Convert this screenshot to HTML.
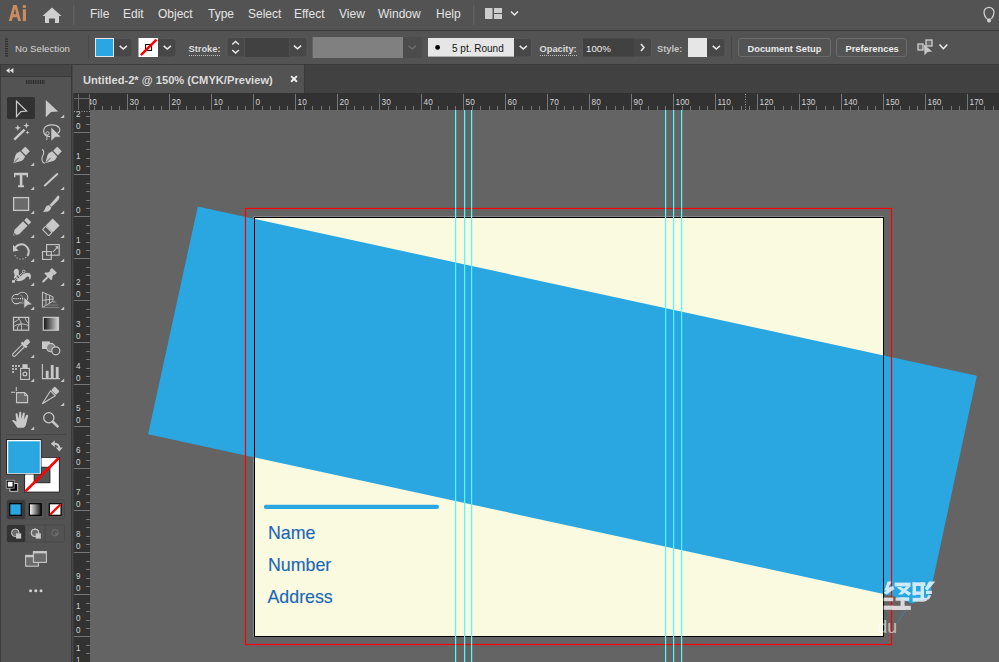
<!DOCTYPE html>
<html><head><meta charset="utf-8">
<style>
html,body{margin:0;padding:0;background:#535353;width:999px;height:662px;overflow:hidden;}
body{font-family:"Liberation Sans",sans-serif;position:relative;}
.a{position:absolute;}
.menu{position:absolute;top:7px;font-size:12px;color:#e4e4e4;white-space:nowrap;}
svg{position:absolute;left:0;top:0}
.cb{font-family:"Liberation Sans",sans-serif;font-size:9.7px;fill:#d6d6d6}
.cbb{font-family:"Liberation Sans",sans-serif;font-size:9.3px;font-weight:bold;fill:#dcdcdc}
.cbk{font-family:"Liberation Sans",sans-serif;font-size:10px;fill:#141414}
.rt{font-family:"Liberation Sans",sans-serif;font-size:9.6px;fill:#d4d4d4}
.bt{font-family:"Liberation Sans",sans-serif;font-size:17.8px;fill:#1a67b8;stroke:#1a67b8;stroke-width:0.15px}
</style></head><body>
<div class="a" style="left:0;top:0;width:999px;height:30px;background:#535353"></div>
<div class="a" style="left:0;top:30px;width:999px;height:1px;background:#3b3b3b"></div>
<div class="a" style="left:0;top:31px;width:999px;height:33px;background:#535353"></div>
<div class="a" style="left:0;top:64px;width:999px;height:1px;background:#3b3b3b"></div>
<div class="a" style="left:0;top:65px;width:1px;height:597px;background:#3b3b3b"></div>
<div class="a" style="left:1px;top:65px;width:70px;height:11px;background:#464646"></div>
<div class="a" style="left:1px;top:76px;width:70px;height:1px;background:#3b3b3b"></div>
<div class="a" style="left:1px;top:77px;width:70px;height:585px;background:#535353"></div>
<div class="a" style="left:71px;top:65px;width:1px;height:597px;background:#383838"></div><div class="a" style="left:72px;top:65px;width:1px;height:597px;background:#474747"></div><div class="a" style="left:73px;top:93px;width:1px;height:569px;background:#3b3b3b"></div>
<div class="a" style="left:74px;top:65px;width:925px;height:28px;background:#414141"></div><div class="a" style="left:304px;top:65px;width:1px;height:28px;background:#3a3a3a"></div>
<div class="a" style="left:74px;top:65px;width:230px;height:28px;background:#535353"></div>
<div class="a" style="left:90px;top:110px;width:909px;height:552px;background:#646464"></div>
<div class="a" style="left:74px;top:93px;width:925px;height:17px;background:#323232"></div>
<div class="a" style="left:74px;top:110px;width:16px;height:552px;background:#323232"></div>
<div class="menu" style="left:90px">File</div>
<div class="menu" style="left:123px">Edit</div>
<div class="menu" style="left:158px">Object</div>
<div class="menu" style="left:208px">Type</div>
<div class="menu" style="left:248px">Select</div>
<div class="menu" style="left:294px">Effect</div>
<div class="menu" style="left:339px">View</div>
<div class="menu" style="left:378px">Window</div>
<div class="menu" style="left:436px">Help</div>
<svg width="999" height="662" viewBox="0 0 999 662">
<g id="rulers"><rect x="94" y="106" width="1" height="4" fill="#777777"/><rect x="102" y="106" width="1" height="4" fill="#777777"/><rect x="111" y="106" width="1" height="4" fill="#777777"/><rect x="119" y="106" width="1" height="4" fill="#777777"/><rect x="127" y="94" width="1" height="16" fill="#777777"/><rect x="136" y="106" width="1" height="4" fill="#777777"/><rect x="144" y="106" width="1" height="4" fill="#777777"/><rect x="153" y="106" width="1" height="4" fill="#777777"/><rect x="161" y="106" width="1" height="4" fill="#777777"/><rect x="169" y="94" width="1" height="16" fill="#777777"/><rect x="178" y="106" width="1" height="4" fill="#777777"/><rect x="186" y="106" width="1" height="4" fill="#777777"/><rect x="195" y="106" width="1" height="4" fill="#777777"/><rect x="203" y="106" width="1" height="4" fill="#777777"/><rect x="211" y="94" width="1" height="16" fill="#777777"/><rect x="220" y="106" width="1" height="4" fill="#777777"/><rect x="228" y="106" width="1" height="4" fill="#777777"/><rect x="237" y="106" width="1" height="4" fill="#777777"/><rect x="245" y="106" width="1" height="4" fill="#777777"/><rect x="253" y="94" width="1" height="16" fill="#777777"/><rect x="262" y="106" width="1" height="4" fill="#777777"/><rect x="270" y="106" width="1" height="4" fill="#777777"/><rect x="279" y="106" width="1" height="4" fill="#777777"/><rect x="287" y="106" width="1" height="4" fill="#777777"/><rect x="295" y="94" width="1" height="16" fill="#777777"/><rect x="304" y="106" width="1" height="4" fill="#777777"/><rect x="312" y="106" width="1" height="4" fill="#777777"/><rect x="321" y="106" width="1" height="4" fill="#777777"/><rect x="329" y="106" width="1" height="4" fill="#777777"/><rect x="337" y="94" width="1" height="16" fill="#777777"/><rect x="346" y="106" width="1" height="4" fill="#777777"/><rect x="354" y="106" width="1" height="4" fill="#777777"/><rect x="363" y="106" width="1" height="4" fill="#777777"/><rect x="371" y="106" width="1" height="4" fill="#777777"/><rect x="379" y="94" width="1" height="16" fill="#777777"/><rect x="388" y="106" width="1" height="4" fill="#777777"/><rect x="396" y="106" width="1" height="4" fill="#777777"/><rect x="405" y="106" width="1" height="4" fill="#777777"/><rect x="413" y="106" width="1" height="4" fill="#777777"/><rect x="421" y="94" width="1" height="16" fill="#777777"/><rect x="430" y="106" width="1" height="4" fill="#777777"/><rect x="438" y="106" width="1" height="4" fill="#777777"/><rect x="447" y="106" width="1" height="4" fill="#777777"/><rect x="455" y="106" width="1" height="4" fill="#777777"/><rect x="463" y="94" width="1" height="16" fill="#777777"/><rect x="472" y="106" width="1" height="4" fill="#777777"/><rect x="480" y="106" width="1" height="4" fill="#777777"/><rect x="489" y="106" width="1" height="4" fill="#777777"/><rect x="497" y="106" width="1" height="4" fill="#777777"/><rect x="505" y="94" width="1" height="16" fill="#777777"/><rect x="514" y="106" width="1" height="4" fill="#777777"/><rect x="522" y="106" width="1" height="4" fill="#777777"/><rect x="531" y="106" width="1" height="4" fill="#777777"/><rect x="539" y="106" width="1" height="4" fill="#777777"/><rect x="547" y="94" width="1" height="16" fill="#777777"/><rect x="556" y="106" width="1" height="4" fill="#777777"/><rect x="564" y="106" width="1" height="4" fill="#777777"/><rect x="573" y="106" width="1" height="4" fill="#777777"/><rect x="581" y="106" width="1" height="4" fill="#777777"/><rect x="589" y="94" width="1" height="16" fill="#777777"/><rect x="598" y="106" width="1" height="4" fill="#777777"/><rect x="606" y="106" width="1" height="4" fill="#777777"/><rect x="615" y="106" width="1" height="4" fill="#777777"/><rect x="623" y="106" width="1" height="4" fill="#777777"/><rect x="631" y="94" width="1" height="16" fill="#777777"/><rect x="640" y="106" width="1" height="4" fill="#777777"/><rect x="648" y="106" width="1" height="4" fill="#777777"/><rect x="657" y="106" width="1" height="4" fill="#777777"/><rect x="665" y="106" width="1" height="4" fill="#777777"/><rect x="673" y="94" width="1" height="16" fill="#777777"/><rect x="682" y="106" width="1" height="4" fill="#777777"/><rect x="690" y="106" width="1" height="4" fill="#777777"/><rect x="699" y="106" width="1" height="4" fill="#777777"/><rect x="707" y="106" width="1" height="4" fill="#777777"/><rect x="715" y="94" width="1" height="16" fill="#777777"/><rect x="724" y="106" width="1" height="4" fill="#777777"/><rect x="732" y="106" width="1" height="4" fill="#777777"/><rect x="741" y="106" width="1" height="4" fill="#777777"/><rect x="749" y="106" width="1" height="4" fill="#777777"/><rect x="757" y="94" width="1" height="16" fill="#777777"/><rect x="766" y="106" width="1" height="4" fill="#777777"/><rect x="774" y="106" width="1" height="4" fill="#777777"/><rect x="783" y="106" width="1" height="4" fill="#777777"/><rect x="791" y="106" width="1" height="4" fill="#777777"/><rect x="799" y="94" width="1" height="16" fill="#777777"/><rect x="808" y="106" width="1" height="4" fill="#777777"/><rect x="816" y="106" width="1" height="4" fill="#777777"/><rect x="825" y="106" width="1" height="4" fill="#777777"/><rect x="833" y="106" width="1" height="4" fill="#777777"/><rect x="841" y="94" width="1" height="16" fill="#777777"/><rect x="850" y="106" width="1" height="4" fill="#777777"/><rect x="858" y="106" width="1" height="4" fill="#777777"/><rect x="867" y="106" width="1" height="4" fill="#777777"/><rect x="875" y="106" width="1" height="4" fill="#777777"/><rect x="883" y="94" width="1" height="16" fill="#777777"/><rect x="892" y="106" width="1" height="4" fill="#777777"/><rect x="900" y="106" width="1" height="4" fill="#777777"/><rect x="909" y="106" width="1" height="4" fill="#777777"/><rect x="917" y="106" width="1" height="4" fill="#777777"/><rect x="925" y="94" width="1" height="16" fill="#777777"/><rect x="934" y="106" width="1" height="4" fill="#777777"/><rect x="942" y="106" width="1" height="4" fill="#777777"/><rect x="951" y="106" width="1" height="4" fill="#777777"/><rect x="959" y="106" width="1" height="4" fill="#777777"/><rect x="967" y="94" width="1" height="16" fill="#777777"/><rect x="976" y="106" width="1" height="4" fill="#777777"/><rect x="984" y="106" width="1" height="4" fill="#777777"/><rect x="993" y="106" width="1" height="4" fill="#777777"/><rect x="86" y="116" width="4" height="1" fill="#777777"/><rect x="86" y="124" width="4" height="1" fill="#777777"/><rect x="74" y="132" width="16" height="1" fill="#777777"/><text transform="translate(78.3,116.6) scale(0.84,1)" class="rt" text-anchor="middle">2</text><text transform="translate(78.3,128.5) scale(0.84,1)" class="rt" text-anchor="middle">0</text><rect x="86" y="141" width="4" height="1" fill="#777777"/><rect x="86" y="149" width="4" height="1" fill="#777777"/><rect x="86" y="158" width="4" height="1" fill="#777777"/><rect x="86" y="166" width="4" height="1" fill="#777777"/><rect x="74" y="174" width="16" height="1" fill="#777777"/><text transform="translate(78.3,158.6) scale(0.84,1)" class="rt" text-anchor="middle">1</text><text transform="translate(78.3,170.5) scale(0.84,1)" class="rt" text-anchor="middle">0</text><rect x="86" y="183" width="4" height="1" fill="#777777"/><rect x="86" y="191" width="4" height="1" fill="#777777"/><rect x="86" y="200" width="4" height="1" fill="#777777"/><rect x="86" y="208" width="4" height="1" fill="#777777"/><rect x="74" y="216" width="16" height="1" fill="#777777"/><text transform="translate(78.3,212.5) scale(0.84,1)" class="rt" text-anchor="middle">0</text><rect x="86" y="225" width="4" height="1" fill="#777777"/><rect x="86" y="233" width="4" height="1" fill="#777777"/><rect x="86" y="242" width="4" height="1" fill="#777777"/><rect x="86" y="250" width="4" height="1" fill="#777777"/><rect x="74" y="258" width="16" height="1" fill="#777777"/><text transform="translate(78.3,242.6) scale(0.84,1)" class="rt" text-anchor="middle">1</text><text transform="translate(78.3,254.5) scale(0.84,1)" class="rt" text-anchor="middle">0</text><rect x="86" y="267" width="4" height="1" fill="#777777"/><rect x="86" y="275" width="4" height="1" fill="#777777"/><rect x="86" y="284" width="4" height="1" fill="#777777"/><rect x="86" y="292" width="4" height="1" fill="#777777"/><rect x="74" y="300" width="16" height="1" fill="#777777"/><text transform="translate(78.3,284.6) scale(0.84,1)" class="rt" text-anchor="middle">2</text><text transform="translate(78.3,296.5) scale(0.84,1)" class="rt" text-anchor="middle">0</text><rect x="86" y="309" width="4" height="1" fill="#777777"/><rect x="86" y="317" width="4" height="1" fill="#777777"/><rect x="86" y="326" width="4" height="1" fill="#777777"/><rect x="86" y="334" width="4" height="1" fill="#777777"/><rect x="74" y="342" width="16" height="1" fill="#777777"/><text transform="translate(78.3,326.6) scale(0.84,1)" class="rt" text-anchor="middle">3</text><text transform="translate(78.3,338.5) scale(0.84,1)" class="rt" text-anchor="middle">0</text><rect x="86" y="351" width="4" height="1" fill="#777777"/><rect x="86" y="359" width="4" height="1" fill="#777777"/><rect x="86" y="368" width="4" height="1" fill="#777777"/><rect x="86" y="376" width="4" height="1" fill="#777777"/><rect x="74" y="384" width="16" height="1" fill="#777777"/><text transform="translate(78.3,368.6) scale(0.84,1)" class="rt" text-anchor="middle">4</text><text transform="translate(78.3,380.5) scale(0.84,1)" class="rt" text-anchor="middle">0</text><rect x="86" y="393" width="4" height="1" fill="#777777"/><rect x="86" y="401" width="4" height="1" fill="#777777"/><rect x="86" y="410" width="4" height="1" fill="#777777"/><rect x="86" y="418" width="4" height="1" fill="#777777"/><rect x="74" y="426" width="16" height="1" fill="#777777"/><text transform="translate(78.3,410.6) scale(0.84,1)" class="rt" text-anchor="middle">5</text><text transform="translate(78.3,422.5) scale(0.84,1)" class="rt" text-anchor="middle">0</text><rect x="86" y="435" width="4" height="1" fill="#777777"/><rect x="86" y="443" width="4" height="1" fill="#777777"/><rect x="86" y="452" width="4" height="1" fill="#777777"/><rect x="86" y="460" width="4" height="1" fill="#777777"/><rect x="74" y="468" width="16" height="1" fill="#777777"/><text transform="translate(78.3,452.6) scale(0.84,1)" class="rt" text-anchor="middle">6</text><text transform="translate(78.3,464.5) scale(0.84,1)" class="rt" text-anchor="middle">0</text><rect x="86" y="477" width="4" height="1" fill="#777777"/><rect x="86" y="485" width="4" height="1" fill="#777777"/><rect x="86" y="494" width="4" height="1" fill="#777777"/><rect x="86" y="502" width="4" height="1" fill="#777777"/><rect x="74" y="510" width="16" height="1" fill="#777777"/><text transform="translate(78.3,494.6) scale(0.84,1)" class="rt" text-anchor="middle">7</text><text transform="translate(78.3,506.5) scale(0.84,1)" class="rt" text-anchor="middle">0</text><rect x="86" y="519" width="4" height="1" fill="#777777"/><rect x="86" y="527" width="4" height="1" fill="#777777"/><rect x="86" y="536" width="4" height="1" fill="#777777"/><rect x="86" y="544" width="4" height="1" fill="#777777"/><rect x="74" y="552" width="16" height="1" fill="#777777"/><text transform="translate(78.3,536.6) scale(0.84,1)" class="rt" text-anchor="middle">8</text><text transform="translate(78.3,548.5) scale(0.84,1)" class="rt" text-anchor="middle">0</text><rect x="86" y="561" width="4" height="1" fill="#777777"/><rect x="86" y="569" width="4" height="1" fill="#777777"/><rect x="86" y="578" width="4" height="1" fill="#777777"/><rect x="86" y="586" width="4" height="1" fill="#777777"/><rect x="74" y="594" width="16" height="1" fill="#777777"/><text transform="translate(78.3,578.6) scale(0.84,1)" class="rt" text-anchor="middle">9</text><text transform="translate(78.3,590.5) scale(0.84,1)" class="rt" text-anchor="middle">0</text><rect x="86" y="603" width="4" height="1" fill="#777777"/><rect x="86" y="611" width="4" height="1" fill="#777777"/><rect x="86" y="620" width="4" height="1" fill="#777777"/><rect x="86" y="628" width="4" height="1" fill="#777777"/><rect x="74" y="636" width="16" height="1" fill="#777777"/><text transform="translate(78.3,608.7) scale(0.84,1)" class="rt" text-anchor="middle">1</text><text transform="translate(78.3,620.6) scale(0.84,1)" class="rt" text-anchor="middle">0</text><text transform="translate(78.3,632.5) scale(0.84,1)" class="rt" text-anchor="middle">0</text><rect x="86" y="645" width="4" height="1" fill="#777777"/><rect x="86" y="653" width="4" height="1" fill="#777777"/><text transform="translate(78.3,650.7) scale(0.84,1)" class="rt" text-anchor="middle">1</text><text transform="translate(78.3,662.6) scale(0.84,1)" class="rt" text-anchor="middle">1</text></g><clipPath id="hclip"><rect x="90" y="93" width="909" height="17"/></clipPath><g clip-path="url(#hclip)"><text transform="translate(87.6,105) scale(0.86,1)" class="rt">40</text><text transform="translate(129.6,105) scale(0.86,1)" class="rt">30</text><text transform="translate(171.6,105) scale(0.86,1)" class="rt">20</text><text transform="translate(213.6,105) scale(0.86,1)" class="rt">10</text><text transform="translate(255.6,105) scale(0.86,1)" class="rt">0</text><text transform="translate(297.6,105) scale(0.86,1)" class="rt">10</text><text transform="translate(339.6,105) scale(0.86,1)" class="rt">20</text><text transform="translate(381.6,105) scale(0.86,1)" class="rt">30</text><text transform="translate(423.6,105) scale(0.86,1)" class="rt">40</text><text transform="translate(465.6,105) scale(0.86,1)" class="rt">50</text><text transform="translate(507.6,105) scale(0.86,1)" class="rt">60</text><text transform="translate(549.6,105) scale(0.86,1)" class="rt">70</text><text transform="translate(591.6,105) scale(0.86,1)" class="rt">80</text><text transform="translate(633.6,105) scale(0.86,1)" class="rt">90</text><text transform="translate(675.6,105) scale(0.86,1)" class="rt">100</text><text transform="translate(717.6,105) scale(0.86,1)" class="rt">110</text><text transform="translate(759.6,105) scale(0.86,1)" class="rt">120</text><text transform="translate(801.6,105) scale(0.86,1)" class="rt">130</text><text transform="translate(843.6,105) scale(0.86,1)" class="rt">140</text><text transform="translate(885.6,105) scale(0.86,1)" class="rt">150</text><text transform="translate(927.6,105) scale(0.86,1)" class="rt">160</text><text transform="translate(969.6,105) scale(0.86,1)" class="rt">170</text></g><rect x="78" y="94" width="1" height="16" fill="#6a6a6a"/><rect x="74" y="98" width="16" height="1" fill="#6a6a6a"/><rect x="89" y="94" width="1" height="16" fill="#6a6a6a"/><line x1="745.5" y1="94" x2="745.5" y2="110" stroke="#9a9a9a" stroke-width="1" stroke-dasharray="1 1.5"/><line x1="74" y1="111.5" x2="90" y2="111.5" stroke="#9a9a9a" stroke-width="1" stroke-dasharray="1 1.5"/><g id="canvas"><rect x="253" y="216" width="631" height="1" fill="#858585"/><rect x="253" y="216" width="1" height="421" fill="#858585"/><rect x="254.5" y="217.5" width="629" height="419" fill="#fafae0" stroke="#000" stroke-width="1"/><polygon points="197.8,206.5 976.9,375.8 929.3,597.5 912,603.5 895,596.5 148.1,434.2" fill="#2aa6e0"/><rect x="254.5" y="217.5" width="629" height="419" fill="none" stroke="#000" stroke-width="1"/><rect x="245.5" y="208.5" width="646" height="436" fill="none" stroke="#ff0000" stroke-width="1.2"/><line x1="265.9" y1="506.9" x2="436.9" y2="506.9" stroke="#2aa6e0" stroke-width="4.2" stroke-linecap="round"/><text x="268" y="539" class="bt">Name</text><text x="268" y="571" class="bt">Number</text><text x="267.5" y="603" class="bt">Address</text><rect x="455" y="110" width="1.2" height="552" fill="#4dfcfc"/><rect x="464" y="110" width="1.2" height="552" fill="#4dfcfc"/><rect x="471" y="110" width="1.2" height="552" fill="#4dfcfc"/><rect x="665" y="110" width="1.2" height="552" fill="#4dfcfc"/><rect x="673" y="110" width="1.2" height="552" fill="#4dfcfc"/><rect x="681" y="110" width="1.2" height="552" fill="#4dfcfc"/></g><path d="M8.8,21.1 L13.3,5.1 L16.7,5.1 L21,21.1 L18.1,21.1 L17.1,17.2 L12.8,17.2 L11.8,21.1 Z M13.5,14.3 L16.4,14.3 L14.95,8.4 Z" fill="#cb8b60" fill-rule="evenodd"/><rect x="22.7" y="5.1" width="3.3" height="3" rx="1.2" fill="#cb8b60"/><rect x="22.8" y="9.3" width="3.2" height="11.8" fill="#cb8b60"/><path d="M52,7.5 L61.5,16 L59,16 L59,23 L55,23 L55,18.5 L49,18.5 L49,23 L45,23 L45,16 L42.5,16 Z" fill="#cfcfcf"/><rect x="73" y="5" width="1.5" height="20" fill="#616161"/><rect x="473" y="5" width="1.5" height="20" fill="#616161"/><rect x="485" y="8" width="7.5" height="11" fill="#cdcdcd"/><rect x="494" y="8" width="8" height="5" fill="#cdcdcd"/><rect x="494" y="14" width="8" height="5" fill="#cdcdcd"/><polyline points="511,11.5 514.5,15 518,11.5" fill="none" stroke="#e8e8e8" stroke-width="1.5"/><path d="M986.6,18.8 C984.6,16.4 984,14.8 984,12.3 A5,5 0 1 1 994,12.3 C994,14.8 993.4,16.4 991.4,18.8" fill="none" stroke="#cdcdcd" stroke-width="1.3"/><path d="M987,18.4 L991,18.4 L991,21.6 L989,22.8 L987,21.6 Z" fill="#cdcdcd"/><rect x="5" y="38.5" width="3" height="1.2" fill="#2e2e2e"/><rect x="5" y="40.9" width="3" height="1.2" fill="#2e2e2e"/><rect x="5" y="43.3" width="3" height="1.2" fill="#2e2e2e"/><rect x="5" y="45.7" width="3" height="1.2" fill="#2e2e2e"/><rect x="5" y="48.1" width="3" height="1.2" fill="#2e2e2e"/><rect x="5" y="50.5" width="3" height="1.2" fill="#2e2e2e"/><rect x="5" y="52.9" width="3" height="1.2" fill="#2e2e2e"/><rect x="5" y="55.3" width="3" height="1.2" fill="#2e2e2e"/><text x="15" y="51.5" class="cb">No Selection</text><rect x="88" y="35.5" width="1" height="24" fill="#474747"/><rect x="95.5" y="38.5" width="36.5" height="18.5" rx="3" fill="#474747" stroke="#575757" stroke-width="1"/><rect x="95.5" y="38.5" width="18" height="18" fill="#2aa6e0" stroke="#e6e6e6" stroke-width="1"/><polyline points="119.7,45.9 123.3,49.1 126.89999999999999,45.9" fill="none" stroke="#ececec" stroke-width="1.5"/><rect x="139" y="38.5" width="37" height="18.5" rx="3" fill="#474747" stroke="#575757" stroke-width="1"/><rect x="138.5" y="38" width="19.5" height="19" fill="#ffffff"/><rect x="145.6" y="44.5" width="6" height="6" fill="none" stroke="#000" stroke-width="1"/><line x1="140.9" y1="55.2" x2="156.5" y2="39.6" stroke="#ff0000" stroke-width="2.6"/><polyline points="163.70000000000002,45.9 167.3,49.1 170.9,45.9" fill="none" stroke="#ececec" stroke-width="1.5"/><text x="188.5" y="51.5" class="cbb">Stroke:</text><line x1="189" y1="55.5" x2="220.5" y2="55.5" stroke="#bdbdbd" stroke-width="1" stroke-dasharray="1 1"/><rect x="227" y="37.5" width="80" height="19.5" rx="3" fill="#474747" stroke="#575757" stroke-width="1"/><rect x="244.5" y="38" width="44.5" height="19" fill="#414141"/><rect x="244" y="38" width="1" height="19" fill="#4f4f4f"/><rect x="289" y="38" width="1" height="19" fill="#4f4f4f"/><polyline points="232.3,44.5 235.6,41.5 238.9,44.5" fill="none" stroke="#ececec" stroke-width="1.4"/><polyline points="232.3,50 235.6,53 238.9,50" fill="none" stroke="#ececec" stroke-width="1.4"/><polyline points="293.9,45.6 297.5,48.800000000000004 301.1,45.6" fill="none" stroke="#ececec" stroke-width="1.5"/><rect x="312.6" y="37" width="90.4" height="21" fill="#808080"/><rect x="403" y="37" width="19" height="21" fill="#4c4c4c"/><polyline points="408.59999999999997,45.9 412.2,49.1 415.8,45.9" fill="none" stroke="#6c6c6c" stroke-width="1.5"/><rect x="428.5" y="38.5" width="103" height="18.5" rx="3" fill="#474747" stroke="#575757" stroke-width="1"/><rect x="428" y="38" width="86" height="18.6" fill="#e6e6e6"/><circle cx="437.6" cy="47.4" r="2.4" fill="#000"/><text x="452" y="51.8" class="cbk">5 pt. Round</text><polyline points="519.6999999999999,45.9 523.3,49.1 526.9,45.9" fill="none" stroke="#ececec" stroke-width="1.5"/><text x="539.5" y="51.5" class="cbb">Opacity:</text><line x1="540" y1="55.5" x2="577" y2="55.5" stroke="#bdbdbd" stroke-width="1" stroke-dasharray="1 1"/><rect x="582.5" y="38" width="69" height="19" rx="3" fill="#474747" stroke="#575757" stroke-width="1"/><rect x="583" y="38.5" width="50.6" height="18" fill="#414141"/><text x="586" y="51.5" class="cb" style="fill:#f0f0f0">100%</text><polyline points="641,44 644,47.5 641,51" fill="none" stroke="#ececec" stroke-width="1.5"/><text x="657" y="51.5" class="cbb" style="fill:#c4c4c4">Style:</text><rect x="688.5" y="38.5" width="36.5" height="18.5" rx="3" fill="#474747" stroke="#575757" stroke-width="1"/><rect x="688" y="38" width="19" height="19" fill="#e6e6e6"/><polyline points="712.6999999999999,45.9 716.3,49.1 719.9,45.9" fill="none" stroke="#ececec" stroke-width="1.5"/><rect x="731" y="35.5" width="1" height="24" fill="#474747"/><rect x="738.5" y="38.5" width="92" height="18" rx="2.5" fill="#535353" stroke="#6c6c6c" stroke-width="1"/><text x="747.5" y="51.5" class="cbb" style="fill:#ececec">Document Setup</text><rect x="836.5" y="38.5" width="70" height="18" rx="2.5" fill="#535353" stroke="#6c6c6c" stroke-width="1"/><text x="845.5" y="51.5" class="cbb" style="fill:#ececec">Preferences</text><rect x="918" y="44" width="5" height="6" fill="#6a6a6a" stroke="#cfcfcf" stroke-width="1.3"/><rect x="926" y="40" width="6" height="6" fill="#6a6a6a" stroke="#cfcfcf" stroke-width="1.3"/><path d="M924,44.5 L932.2,51.6 L927.6,52 L924.5,55.3 Z" fill="#c8c8c8"/><polyline points="939.5,44.5 943.4,48.7 947.3,44.5" fill="none" stroke="#f0f0f0" stroke-width="1.5"/><text x="83" y="83.5" style="font-family:&quot;Liberation Sans&quot;,sans-serif;font-size:11.15px;font-weight:bold;fill:#dcdcdc">Untitled-2* @ 150% (CMYK/Preview)</text><path d="M291.1,76.1 L296.9,81.7 M296.9,76.1 L291.1,81.7" stroke="#f0f0f0" stroke-width="1.9"/><path d="M9.6,68 L6,70.6 L9.6,73.2 Z M13.4,68 L9.8,70.6 L13.4,73.2 Z" fill="#e0e0e0"/><rect x="26.00" y="80" width="1" height="4" fill="#2c2c2c"/><rect x="27.75" y="80" width="1" height="4" fill="#2c2c2c"/><rect x="29.50" y="80" width="1" height="4" fill="#2c2c2c"/><rect x="31.25" y="80" width="1" height="4" fill="#2c2c2c"/><rect x="33.00" y="80" width="1" height="4" fill="#2c2c2c"/><rect x="34.75" y="80" width="1" height="4" fill="#2c2c2c"/><rect x="36.50" y="80" width="1" height="4" fill="#2c2c2c"/><rect x="38.25" y="80" width="1" height="4" fill="#2c2c2c"/><rect x="40.00" y="80" width="1" height="4" fill="#2c2c2c"/><rect x="41.75" y="80" width="1" height="4" fill="#2c2c2c"/><rect x="43.50" y="80" width="1" height="4" fill="#2c2c2c"/><rect x="7" y="97" width="28" height="22" rx="2" fill="#313131"/><path d="M16.5,101.2 L26.6,111.1 L20.9,111.6 L16.5,116.6 Z" fill="none" stroke="#c8c8c8" stroke-width="1.25" stroke-linejoin="miter"/><path d="M45.8,99.9 L58.2,111.6 L51,112 L45.8,117.3 Z" fill="#c8c8c8"/><path d="M64.2,114.5 L64.2,118 L60.6,118 Z" fill="#c8c8c8"/><line x1="14.3" y1="139.7" x2="24.6" y2="129.7" stroke="#c8c8c8" stroke-width="2.5"/><polygon points="17.80,124.60 18.65,126.95 21.00,127.80 18.65,128.65 17.80,131.00 16.95,128.65 14.60,127.80 16.95,126.95" fill="#c8c8c8"/><polygon points="26.40,122.60 27.18,124.82 29.40,125.60 27.18,126.38 26.40,128.60 25.62,126.38 23.40,125.60 25.62,124.82" fill="#c8c8c8"/><polygon points="27.50,130.40 28.07,131.93 29.60,132.50 28.07,133.07 27.50,134.60 26.93,133.07 25.40,132.50 26.93,131.93" fill="#c8c8c8"/><path d="M50,136.5 C44,137 42.5,131 44.5,128 C47,124 56,124 59,127.5 C61,130 59.5,132.5 57,133.5" fill="none" stroke="#c8c8c8" stroke-width="1.2"/><circle cx="47.5" cy="133.3" r="1.6" fill="none" stroke="#c8c8c8" stroke-width="1"/><path d="M47.5,135 C46,137 48,138 46.5,140" fill="none" stroke="#c8c8c8" stroke-width="1"/><path d="M51,127 L61.2,136.9 L55.2,137.3 L51,141.3 Z" fill="#c8c8c8" stroke="#535353" stroke-width="0.6"/><g transform="translate(13.3,163.2) rotate(45)"><path d="M0,0 C-1.5,-3 -4.6,-7 -4.6,-9.5 L-3.6,-13.2 L3.6,-13.2 L4.6,-9.5 C4.6,-7 1.5,-3 0,0 Z" fill="#c8c8c8"/><line x1="0" y1="-1" x2="0" y2="-7.5" stroke="#535353" stroke-width="0.9"/><rect x="-3.3" y="-20.2" width="6.6" height="5.8" rx="0.5" fill="#c8c8c8"/></g><path d="M34.2,162.5 L34.2,166 L30.6,166 Z" fill="#c8c8c8"/><g transform="translate(45.3,163.2) rotate(45)"><path d="M0,0 C-1.5,-3 -4.6,-7 -4.6,-9.5 L-3.6,-13.2 L3.6,-13.2 L4.6,-9.5 C4.6,-7 1.5,-3 0,0 Z" fill="#c8c8c8"/><line x1="0" y1="-1" x2="0" y2="-7.5" stroke="#535353" stroke-width="0.9"/><rect x="-3.3" y="-20.2" width="6.6" height="5.8" rx="0.5" fill="#c8c8c8"/></g><path d="M42.2,149.2 C44.5,151 44,153.5 42.6,156 C41,159 42,162.8 45,163.2" fill="none" stroke="#c8c8c8" stroke-width="1.1"/><path d="M14,172.8 L28,172.8 L28,177.2 L26.6,177.2 L26.6,175.3 L22.4,175.3 L22.4,185.3 L24,185.3 L24,187.2 L18,187.2 L18,185.3 L19.8,185.3 L19.8,175.3 L15.4,175.3 L15.4,177.2 L14,177.2 Z" fill="#c8c8c8"/><path d="M34.2,186.5 L34.2,190 L30.6,190 Z" fill="#c8c8c8"/><line x1="44.3" y1="186.1" x2="57.8" y2="173.5" stroke="#c8c8c8" stroke-width="2"/><path d="M64.2,186.5 L64.2,190 L60.6,190 Z" fill="#c8c8c8"/><rect x="13.6" y="197.6" width="15" height="12.8" fill="#6a6a6a" stroke="#c8c8c8" stroke-width="1.3"/><path d="M34.2,210.5 L34.2,214 L30.6,214 Z" fill="#c8c8c8"/><path d="M58.6,195.6 C60,196.8 59.5,198.5 58,200.5 L51.6,206.8 L49.6,204.9 L55.6,198.2 C57,196.6 57.8,195.2 58.6,195.6 Z" fill="#c8c8c8"/><path d="M49.2,205.3 L51.2,207.3 C51,210 49,211.7 46,211.8 L42.8,211.9 C44.3,210.6 44.8,209.2 45.5,207.7 C46.3,206 47.5,205.2 49.2,205.3 Z" fill="#c8c8c8"/><path d="M64.2,210.5 L64.2,214 L60.6,214 Z" fill="#c8c8c8"/><g transform="translate(13.3,235.6) rotate(45)"><path d="M0,0 L-3.2,-5 L-3.2,-17 L3.2,-17 L3.2,-5 Z" fill="#c8c8c8"/><path d="M0,-0.8 L-1.2,-2.8 L1.2,-2.8 Z" fill="#535353"/><rect x="-3.2" y="-18.5" width="6.4" height="1.1" fill="#535353"/><rect x="-3.2" y="-22.2" width="6.4" height="3.7" rx="0.8" fill="#c8c8c8"/></g><path d="M34.2,234.5 L34.2,238 L30.6,238 Z" fill="#c8c8c8"/><g transform="translate(50.8,227.4) rotate(45)"><rect x="-4.9" y="-7.6" width="9.8" height="9.8" fill="#c8c8c8"/><rect x="-4.4" y="2.8" width="8.8" height="4.6" rx="0.6" fill="none" stroke="#c8c8c8" stroke-width="1.1"/></g><path d="M64.2,234.5 L64.2,238 L60.6,238 Z" fill="#c8c8c8"/><path d="M15.2,247.8 A7,7 0 1 1 27.6,255.6" fill="none" stroke="#c8c8c8" stroke-width="2"/><path d="M13,244.8 L18.6,250.8 L13,251.4 Z" fill="#c8c8c8"/><circle cx="15.14" cy="255.70" r="0.6" fill="#c8c8c8"/><circle cx="17.18" cy="257.93" r="0.6" fill="#c8c8c8"/><circle cx="19.98" cy="259.09" r="0.6" fill="#c8c8c8"/><circle cx="23.01" cy="258.96" r="0.6" fill="#c8c8c8"/><circle cx="25.70" cy="257.56" r="0.6" fill="#c8c8c8"/><circle cx="27.26" cy="255.70" r="0.6" fill="#c8c8c8"/><path d="M34.2,258.5 L34.2,262 L30.6,262 Z" fill="#c8c8c8"/><rect x="46.6" y="244.6" width="12.6" height="10.6" fill="none" stroke="#c8c8c8" stroke-width="1.1"/><rect x="42.5" y="251.6" width="8.8" height="7.8" fill="none" stroke="#c8c8c8" stroke-width="1.1"/><line x1="53" y1="252" x2="57.6" y2="247" stroke="#c8c8c8" stroke-width="1.1"/><path d="M58.4,246.2 L58.4,249.6 L55,246.2 Z" fill="#c8c8c8"/><path d="M64.2,258.5 L64.2,262 L60.6,262 Z" fill="#c8c8c8"/><path d="M14.2,273.4 C13,271.6 14.4,268.6 16.6,268.8 C18.6,269 19.4,271 18.8,273 C18.4,274.4 19.6,275.2 21,274.6 L24.6,273.4 C26.5,272.6 28.6,272.4 30,273.6 C31.4,275 31.2,277.6 30.2,279.2 L29.2,279.4 C29.6,277.6 29,276.2 27.6,276.4 C26,276.8 25.2,278.6 23.6,279.8 C21.4,281.4 18.4,281.4 16,280.6 C14.4,280 13.6,278.4 14.2,276.6 C14.6,275.6 14.8,274.4 14.2,273.4 Z" fill="#c8c8c8"/><line x1="13.4" y1="281.4" x2="23.6" y2="271.6" stroke="#535353" stroke-width="2.2"/><line x1="13.4" y1="281.4" x2="23.6" y2="271.6" stroke="#c8c8c8" stroke-width="0.9"/><circle cx="17.9" cy="276.9" r="1.9" fill="#535353" stroke="#c8c8c8" stroke-width="1"/><line x1="16.6" y1="278.2" x2="19.2" y2="275.6" stroke="#c8c8c8" stroke-width="0.8"/><rect x="12.1" y="280.1" width="2.8" height="2.6" fill="#c8c8c8"/><circle cx="23.7" cy="271.5" r="1.4" fill="#535353" stroke="#c8c8c8" stroke-width="0.9"/><path d="M34.2,282.5 L34.2,286 L30.6,286 Z" fill="#c8c8c8"/><g transform="translate(42.4,282.3) rotate(45)"><path d="M-1,-8 L1,-8 L1,-1.2 L0,0.4 L-1,-1.2 Z" fill="#c8c8c8"/><path d="M-4.8,-7.6 L4.8,-7.6 L4.8,-9.4 C3,-10.2 2.4,-12 2.6,-13.8 L-2.6,-13.8 C-2.4,-12 -3,-10.2 -4.8,-9.4 Z" fill="#c8c8c8"/><rect x="-3.4" y="-17" width="6.8" height="3.4" fill="#c8c8c8"/></g><path d="M64.2,282.5 L64.2,286 L60.6,286 Z" fill="#c8c8c8"/><circle cx="16.6" cy="299" r="4.6" fill="none" stroke="#c8c8c8" stroke-width="1.1"/><circle cx="22.4" cy="297.6" r="5.4" fill="none" stroke="#c8c8c8" stroke-width="1.1"/><circle cx="16.6" cy="299" r="4.05" fill="#535353"/><circle cx="22.4" cy="297.6" r="4.85" fill="#535353"/><path d="M19.8,294.6 A4.6,4.6 0 0 1 19.8,303.4" fill="none" stroke="#8a8a8a" stroke-width="0.9"/><line x1="13.4" y1="298.6" x2="24" y2="298.6" stroke="#e8e8e8" stroke-width="1.1" stroke-dasharray="1 1.2"/><path d="M23.9,297.2 L32.4,304.6 L27.6,305.2 L23.9,308.6 Z" fill="#c8c8c8" stroke="#535353" stroke-width="0.7"/><path d="M34.2,306.5 L34.2,310 L30.6,310 Z" fill="#c8c8c8"/><path d="M42.4,292.2 L42.4,307.6 L53,301 L53,296.8 Z" fill="none" stroke="#c8c8c8" stroke-width="1"/><line x1="46" y1="294" x2="46" y2="305.4" stroke="#c8c8c8" stroke-width="0.9"/><line x1="49.5" y1="295.3" x2="49.5" y2="303.2" stroke="#c8c8c8" stroke-width="0.9"/><line x1="42.4" y1="300.4" x2="53" y2="299" stroke="#c8c8c8" stroke-width="0.9"/><path d="M53,299 L57,303 L53,303 Z" fill="#7a7a7a"/><rect x="44" y="304.6" width="14" height="0.9" fill="#888"/><rect x="42.4" y="307" width="17" height="0.9" fill="#888"/><path d="M64.2,306.5 L64.2,310 L60.6,310 Z" fill="#c8c8c8"/><rect x="13.5" y="317.4" width="15.2" height="12.8" fill="none" stroke="#c8c8c8" stroke-width="1.2"/><path d="M13.5,322.5 C17,321 19,319 20,317.4 M13.5,327 C16,324.5 20.5,322.5 28.7,325.5 M17.3,317.4 C20,319.5 22,322 21.5,330.2 M25,317.4 C26,320 26.6,323 28.7,323 M17.5,330.2 C17,327 18.5,325 20.8,324" fill="none" stroke="#c8c8c8" stroke-width="0.9"/><defs><linearGradient id="gr" x1="0" x2="1" y1="0" y2="0"><stop offset="0" stop-color="#111"/><stop offset="1" stop-color="#d8d8d8"/></linearGradient><linearGradient id="gr2" x1="0" x2="1" y1="0" y2="0"><stop offset="0" stop-color="#fff"/><stop offset="1" stop-color="#111"/></linearGradient></defs><rect x="43.3" y="317.4" width="15.2" height="12.8" fill="url(#gr)" stroke="#c8c8c8" stroke-width="1.2"/><g transform="translate(14.2,354.8) rotate(45)"><path d="M-1.6,0 L-1.6,-13 L1.6,-13 L1.6,0 A1.6,1.6 0 0 1 -1.6,0 Z" fill="none" stroke="#c8c8c8" stroke-width="1.1"/><rect x="-3.6" y="-15.3" width="7.2" height="2.4" fill="#c8c8c8"/><rect x="-2.4" y="-20.8" width="4.8" height="5.8" rx="1.6" fill="#c8c8c8"/></g><path d="M34.2,354.5 L34.2,358 L30.6,358 Z" fill="#c8c8c8"/><rect x="42" y="341.4" width="7.8" height="7.6" fill="#c8c8c8"/><circle cx="50.8" cy="347.6" r="4.2" fill="#858585" stroke="#c8c8c8" stroke-width="1.1"/><circle cx="55.8" cy="350.8" r="4" fill="#535353" stroke="#c8c8c8" stroke-width="1.2"/><rect x="12" y="365" width="2" height="2" fill="#b4b4b4"/><rect x="15" y="365" width="2" height="2" fill="#b4b4b4"/><rect x="18" y="365" width="2" height="2" fill="#b4b4b4"/><rect x="12" y="368" width="2" height="2" fill="#b4b4b4"/><rect x="15" y="368" width="2" height="2" fill="#b4b4b4"/><rect x="12" y="371" width="2" height="2" fill="#b4b4b4"/><rect x="20.6" y="368.4" width="8.8" height="11" fill="none" stroke="#c8c8c8" stroke-width="1.1"/><rect x="22.4" y="364.2" width="5.2" height="4" fill="#c8c8c8"/><circle cx="24.9" cy="374" r="1.9" fill="none" stroke="#c8c8c8" stroke-width="1.2"/><path d="M34.2,378.5 L34.2,382 L30.6,382 Z" fill="#c8c8c8"/><path d="M42.4,364 L42.4,378.6 L59.8,378.6" fill="none" stroke="#c8c8c8" stroke-width="1.1"/><rect x="45.8" y="370.8" width="2.8" height="7.8" fill="#c8c8c8"/><rect x="50.8" y="365" width="2.8" height="13.6" fill="#c8c8c8"/><rect x="55.8" y="367" width="2.8" height="11.6" fill="#c8c8c8"/><path d="M64.2,378.5 L64.2,382 L60.6,382 Z" fill="#c8c8c8"/><path d="M16.5,392.6 L24.6,392.6 L27.6,395.6 L27.6,402.6 L16.5,402.6 Z" fill="#6a6a6a" stroke="#c8c8c8" stroke-width="1.1"/><path d="M24.6,392.6 L24.6,395.6 L27.6,395.6" fill="none" stroke="#c8c8c8" stroke-width="0.9"/><line x1="16.3" y1="387" x2="16.3" y2="391.2" stroke="#c8c8c8" stroke-width="1"/><line x1="11" y1="392.3" x2="15.2" y2="392.3" stroke="#c8c8c8" stroke-width="1"/><g transform="translate(42.3,403.8) rotate(45)"><path d="M0,0 L-3.4,-15 L3.4,-15 Z" fill="none" stroke="#c8c8c8" stroke-width="1.1"/><rect x="-3.4" y="-21" width="6.8" height="5" rx="0.8" fill="#c8c8c8"/></g><path d="M64.2,402.5 L64.2,406 L60.6,406 Z" fill="#c8c8c8"/><path d="M17.4,427.8 C15.5,425.2 14.5,423.2 12.6,421.5 C11.8,420.6 12.8,419.6 14,420.2 L16.5,421.8 L15.6,414.5 C15.4,413 17.3,412.8 17.6,414.2 L18.6,419 L19.2,412.8 C19.3,411.4 21.2,411.4 21.2,412.8 L21.4,419 L22.8,413.3 C23.2,411.9 25,412.2 24.8,413.7 L24,419.6 L26,415.4 C26.6,414.1 28.5,414.6 28.1,416 L26.2,424 C25.6,426.5 24.4,427.8 22.8,427.8 Z" fill="#c8c8c8"/><path d="M34.2,426.5 L34.2,430 L30.6,430 Z" fill="#c8c8c8"/><circle cx="48.8" cy="417.7" r="5.1" fill="none" stroke="#c8c8c8" stroke-width="1.3"/><line x1="52.5" y1="421.4" x2="58.3" y2="427.2" stroke="#c8c8c8" stroke-width="2.6"/><rect x="6" y="434" width="60" height="1" fill="#474747"/><rect x="24.2" y="457" width="35.5" height="35.5" fill="#262626"/><rect x="25.1" y="457.9" width="33.8" height="33.7" fill="#ffffff"/><rect x="34.2" y="467.3" width="15.7" height="15.4" fill="#535353" stroke="#262626" stroke-width="1"/><line x1="25.4" y1="491.4" x2="58.8" y2="458" stroke="#ff0000" stroke-width="2.6"/><rect x="6" y="439" width="35.5" height="35.5" fill="#262626"/><rect x="7" y="440" width="33.8" height="33.8" fill="#ffffff"/><rect x="8.2" y="441.3" width="31.6" height="31.8" fill="#2aa6e0"/><path d="M54.2,443.8 C57.6,443.8 59.3,445.6 59.3,448.6" fill="none" stroke="#c8c8c8" stroke-width="2"/><path d="M50.8,443.8 L54.8,440.4 L54.8,447.2 Z M59.3,451.6 L55.8,447.6 L62.8,447.6 Z" fill="#c8c8c8"/><rect x="9.9" y="483.5" width="7.8" height="7.8" fill="#000" stroke="#c8c8c8" stroke-width="1"/><rect x="5.9" y="479.9" width="8.6" height="8.6" fill="#c8c8c8"/><rect x="6.6" y="480.6" width="7.2" height="7.2" fill="#000"/><rect x="7.8" y="481.8" width="4.8" height="4.8" fill="#fff"/><rect x="7" y="500" width="57.5" height="19" rx="2" fill="none" stroke="#4a4a4a" stroke-width="1"/><rect x="7" y="500" width="18" height="19" rx="1.5" fill="#3a3a3a"/><rect x="25" y="500" width="1" height="19" fill="#4a4a4a"/><rect x="44.8" y="500" width="1" height="19" fill="#4a4a4a"/><rect x="9.7" y="503.7" width="11.6" height="11.6" fill="#2aa6e0" stroke="#000" stroke-width="1.2"/><rect x="29.4" y="503.7" width="11.8" height="11.6" fill="url(#gr2)" stroke="#000" stroke-width="1.2"/><rect x="49.3" y="503.7" width="11.8" height="11.6" fill="#fff" stroke="#000" stroke-width="1.2"/><line x1="50" y1="514.8" x2="60.6" y2="504.2" stroke="#ff0000" stroke-width="2.2"/><rect x="7" y="525" width="57.5" height="17" rx="2" fill="none" stroke="#4a4a4a" stroke-width="1"/><rect x="7" y="525" width="18" height="17" rx="1.5" fill="#333333"/><rect x="25" y="525" width="1" height="17" fill="#4a4a4a"/><rect x="44.8" y="525" width="1" height="17" fill="#4a4a4a"/><circle cx="15.3" cy="532.8" r="3.8" fill="#6a6a6a" stroke="#c8c8c8" stroke-width="1"/><rect x="16" y="533.4" width="5.2" height="5.2" fill="#c8c8c8"/><circle cx="35" cy="532.8" r="3.8" fill="#6a6a6a" stroke="#c8c8c8" stroke-width="1"/><rect x="35.7" y="533.4" width="5.2" height="5.2" fill="#c8c8c8"/><circle cx="35" cy="532.8" r="3.8" fill="none" stroke="#c8c8c8" stroke-width="1"/><circle cx="55" cy="532.8" r="3.2" fill="none" stroke="#6e6e6e" stroke-width="1"/><path d="M55.2,533 L58.2,533 A3.2,3.2 0 0 1 55.2,536 Z" fill="#6e6e6e"/><rect x="25.6" y="555.4" width="12.8" height="10.8" fill="#6a6a6a" stroke="#c8c8c8" stroke-width="1.1"/><rect x="33.4" y="551.6" width="13" height="10.8" fill="#6a6a6a" stroke="#c8c8c8" stroke-width="1.1"/><rect x="33.4" y="551.6" width="13" height="1.8" fill="#c8c8c8"/><rect x="25.6" y="555.4" width="7.6" height="1.8" fill="#c8c8c8"/><circle cx="30.6" cy="590.8" r="1.5" fill="#d0d0d0"/><circle cx="35.8" cy="590.8" r="1.5" fill="#d0d0d0"/><circle cx="41" cy="590.8" r="1.5" fill="#d0d0d0"/><clipPath id="wmclip"><polygon points="870,570 945,570 945,590 907,612 870,640"/></clipPath><g fill="#ffffff" opacity="0.76" clip-path="url(#wmclip)"><path d="M887.6,581.4 L891.6,581.4 L888.4,587.4 L893.2,586 L894.4,589 L886.4,594.8 L884,592.6 L886.8,590.2 L884.4,590.4 Z"/><rect x="883.6" y="597.6" width="9.6" height="3.6"/><rect x="883.6" y="605.6" width="9.6" height="4.2"/><rect x="894.6" y="582.6" width="16" height="3.8"/><path d="M906.4,586.2 L910.6,586.2 L902.4,594.6 L898,594.6 Z M896.6,587.6 L900.4,586.8 L911.2,593 L909,595.8 Z"/><rect x="895.6" y="597.4" width="13.6" height="3.4"/><rect x="900.6" y="597.4" width="4" height="12"/><rect x="891.6" y="605.8" width="19.2" height="4.2"/><rect x="912.6" y="582.4" width="12.8" height="3.6"/><rect x="912.6" y="582.4" width="3.4" height="13"/><rect x="920.6" y="582.4" width="3.4" height="19"/><rect x="912.6" y="591.4" width="11.4" height="3.4"/><rect x="912.6" y="597.8" width="14.4" height="3.8"/><path d="M929,581.4 L935.4,581.4 L927.4,590.6 L924.8,588.6 Z M926,590.8 L932,590.8 L932,594 L926,594 Z M928,595.2 L931.2,595.2 L929,599.8 L926.4,599.8 Z"/></g><path d="M906.8,609.4 C903,614 899.5,619 897.4,623.4" fill="none" stroke="#2f8fc6" stroke-width="0.8" opacity="0.8"/><text x="877.6" y="632.8" style="font-family:&quot;Liberation Sans&quot;,sans-serif;font-size:17.5px;fill:#ffffff;fill-opacity:0.62">du</text>
</svg>
</body></html>
